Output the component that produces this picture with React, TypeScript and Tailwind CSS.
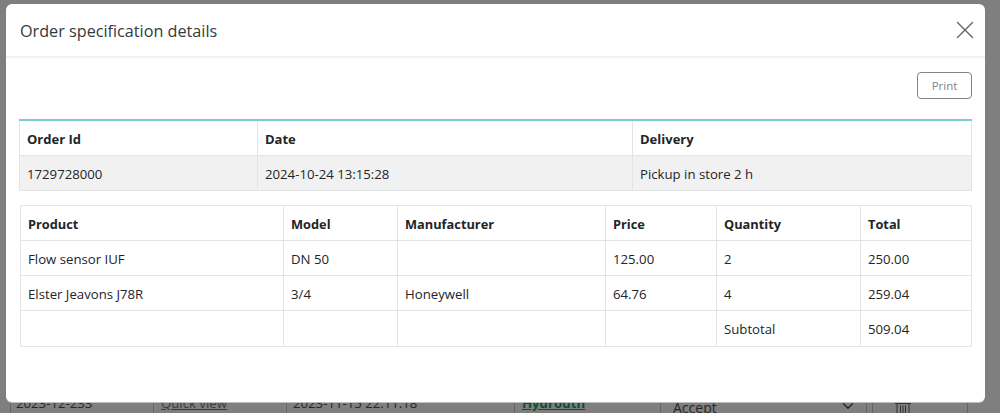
import { ChevronDown, X } from 'lucide-react';

const font = "font-['Open_Sans','Noto_Sans',sans-serif]";

const orderCols = ['w-[238px]', 'w-[375px]', 'w-[339px]'];
const productCols = ['w-[263px]', 'w-[114px]', 'w-[208px]', 'w-[111px]', 'w-[144px]', 'w-[111px]'];

const products = [
	{ height: 'h-[35px]', cells: ['Flow sensor IUF', 'DN 50', '', '125.00', '2', '250.00'] },
	{ height: 'h-[35px]', cells: ['Elster Jeavons J78R', '3/4', 'Honeywell', '64.76', '4', '259.04'] },
	{ height: 'h-[36px]', cells: ['', '', '', '', 'Subtotal', '509.04'] },
];

function BackgroundRow() {
	return (
		<div className="flex h-[413px] flex-col justify-end overflow-hidden pl-[10px] text-[13.2px] leading-[20px] text-[#262626]">
			<div className="flex h-[30px] w-[958px] border-x border-[#666]">
				<div className="w-[143px] border-r border-[#666] pl-[5px] pt-[10px]">2023-12-233</div>
				<div className="w-[133px] border-r border-[#666] pl-[7px] pt-[10px] text-[#3a3a3a] underline">Quick view</div>
				<div className="w-[228px] border-r border-[#666] pl-[6px] pt-[10px]">2023-11-15 22:11:18</div>
				<div className="w-[146px] border-r border-[#666] pl-[7px] pt-[10px] font-bold text-[#0b4f33] underline">Hydrouth</div>
				<div className="flex w-[205px] items-start justify-between pl-[12px] pr-[9px] pt-[15px] text-[14px]">
					Accept
					<ChevronDown className="mt-[-1px] h-[18px] w-[18px]" strokeWidth={1.8} />
				</div>
				<div className="w-[7px] border-x border-[#666]" />
				<div className="flex flex-1 justify-center pr-[34px] pt-[19px]">
					<svg width="18" height="11" viewBox="0 0 18 11" fill="none" stroke="#333" strokeWidth="1">
						<path d="M1 1.5h16M3 1.5V11M15 1.5V11M6.5 3.5V11M9 3.5V11M11.5 3.5V11" />
					</svg>
				</div>
			</div>
		</div>
	);
}

export default function App() {
	return (
		<div className={`relative h-[413px] overflow-hidden bg-[#7f7f7f] ${font}`}>
			<BackgroundRow />

			{/* MODAL */}
			<div className="absolute left-[6px] top-[4px] h-[398px] w-[979px] rounded-[6px] bg-white text-[#212529] shadow-[0_1px_0_#bdbdbd]">
				<div className="flex h-[54px] items-center justify-between border-b-2 border-[#f1f1f2] pl-[14px] pr-[5px]">
					<h5 className="mt-[2px] text-[16.2px] leading-none text-[#333a40]">Order specification details</h5>
					<X className="h-[30px] w-[30px] text-[#5f6468]" strokeWidth={1.1} />
				</div>

				<div className="pl-[13px] pr-[13px]">
					<div className="flex justify-end pt-[14px]">
						<button className="h-[27px] w-[55px] rounded-[4px] border border-[#80858a] text-[11.5px] text-[#80858a]">
							Print
						</button>
					</div>

					<table className="mt-[20px] w-[952px] table-fixed border-collapse text-[13.2px]">
						<colgroup>
							{orderCols.map(c => (
								<col key={c} className={c} />
							))}
						</colgroup>
						<thead>
							<tr className="h-[35px] border-t-2 border-t-[#7ccbd3]">
								{['Order Id', 'Date', 'Delivery'].map(h => (
									<th key={h} className="border-x border-b border-[#e3e4e6] px-[7px] pt-[3px] text-left text-[13px] font-bold">
										{h}
									</th>
								))}
							</tr>
						</thead>
						<tbody>
							<tr className="h-[35px] bg-[#f1f1f2]">
								{['1729728000', '2024-10-24 13:15:28', 'Pickup in store 2 h'].map(v => (
									<td key={v} className="border border-[#e3e4e6] px-[7px] pt-[4px]">
										{v}
									</td>
								))}
							</tr>
						</tbody>
					</table>

					<table className="ml-[1px] mt-[14px] w-[951px] table-fixed border-collapse text-[13.2px]">
						<colgroup>
							{productCols.map(c => (
								<col key={c} className={c} />
							))}
						</colgroup>
						<thead>
							<tr className="h-[35px]">
								{['Product', 'Model', 'Manufacturer', 'Price', 'Quantity', 'Total'].map(h => (
									<th key={h} className="border border-[#e3e4e6] px-[7px] pt-[4px] text-left text-[12.8px] font-bold">
										{h}
									</th>
								))}
							</tr>
						</thead>
						<tbody>
							{products.map(row => (
								<tr key={row.cells[5]} className={row.height}>
									{row.cells.map((v, i) => (
										<td key={i} className="border border-[#e3e4e6] px-[7px] pt-[4px]">
											{v}
										</td>
									))}
								</tr>
							))}
						</tbody>
					</table>
				</div>
			</div>
		</div>
	);
}
